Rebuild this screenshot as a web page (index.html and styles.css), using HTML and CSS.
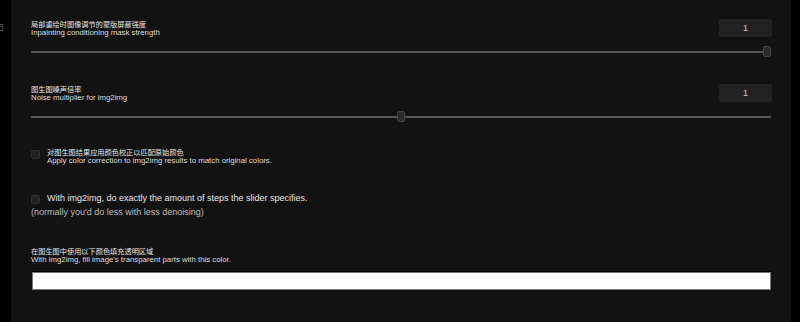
FILE: index.html
```html
<!DOCTYPE html>
<html lang="zh">
<head>
  <meta charset="UTF-8" />
  <title>img2img settings</title>
  <link rel="stylesheet" href="styles.css">
</head>
<body>

<div class="edge">
  <span class="edge-char">右</span>
</div>

<div class="panel">

  <div class="field">
    <div class="head">
      <div class="label">
        <div class="zh">局部重绘时图像调节的蒙版屏蔽强度</div>
        <div class="en">Inpainting conditioning mask strength</div>
      </div>
      <div class="num">1</div>
    </div>
    <div class="track"><div class="thumb" style="left: 99.5%"></div></div>
  </div>

  <div class="field">
    <div class="head">
      <div class="label">
        <div class="zh">图生图噪声倍率</div>
        <div class="en">Noise multiplier for img2img</div>
      </div>
      <div class="num">1</div>
    </div>
    <div class="track"><div class="thumb" style="left: 50%"></div></div>
  </div>

  <div class="check first">
    <span class="box"></span>
    <div class="label">
      <div class="zh">对图生图结果应用颜色校正以匹配原始颜色</div>
      <div class="en">Apply color correction to img2img results to match original colors.</div>
    </div>
  </div>

  <div class="check big">
    <span class="box"></span>
    <div class="label">With img2img, do exactly the amount of steps the slider specifies.</div>
  </div>
  <div class="note">(normally you'd do less with less denoising)</div>

  <div class="color-field">
    <div class="label">
      <div class="zh">在图生图中使用以下颜色填充透明区域</div>
      <div class="en">With img2img, fill image's transparent parts with this color.</div>
    </div>
    <div class="swatch"></div>
  </div>

</div>

<div class="edge right"></div>

</body>
</html>
```

FILE: styles.css
```css
body {
  margin: 0;
  height: 322px;
  overflow: hidden;
  display: flex;
  background: #000;
  font-family: 'Liberation Sans', Arial, 'Noto Sans CJK SC', sans-serif;
  color: #ddd;
}
.edge {
  width: 11px;
  position: relative;
  overflow: hidden;
}
.edge.right {
  width: 9px;
}
.edge-char {
  position: absolute;
  top: 22px;
  left: -5px;
  font-size: 9px;
  line-height: 10px;
  color: #666;
}
.panel {
  flex: 1;
  background: #121212;
  padding: 19px 20px 0 20px;
}
.label {
  font-size: 7.8px;
  line-height: 8px;
}
.zh {
  font-size: 7.2px;
  color: #e4e4e4;
}
.field {
  margin-bottom: 31px;
}
.head {
  display: flex;
  justify-content: space-between;
  align-items: flex-start;
}
.head .label {
  padding-top: 2px;
}
.num {
  width: 53px;
  height: 18px;
  margin-right: -1px;
  background: #222;
  border-radius: 3px;
  color: #ccc;
  font-size: 9px;
  line-height: 18px;
  text-align: center;
}
.track {
  position: relative;
  height: 2px;
  margin-top: 14px;
  background: #575757;
}
.thumb {
  position: absolute;
  top: -5px;
  width: 6px;
  height: 9px;
  transform: translateX(-50%);
  background: #2a2a2a;
  border: 1px solid #444;
  border-radius: 2px;
}
.check {
  display: flex;
  align-items: flex-start;
  gap: 7px;
}
.check.first {
  margin-top: 4px;
}
.box {
  width: 7px;
  height: 7px;
  margin-top: 1px;
  background: #222;
  border: 1px solid #2e2e2e;
  border-radius: 2px;
  flex: none;
}
.check.big {
  margin-top: 28px;
}
.check.big .box {
  margin-top: 2px;
}
.check.big .label {
  font-size: 9px;
  line-height: 10px;
  color: #e6e6e6;
}
.note {
  margin-top: 3px;
  font-size: 9px;
  line-height: 10px;
  color: #bbb;
}
.color-field {
  margin-top: 31px;
}
.swatch {
  height: 16px;
  margin: 8px 0 0 1px;
  background: #fff;
  border: 1px solid #777;
  box-shadow: 0 -1px 0 #000;
}
```
